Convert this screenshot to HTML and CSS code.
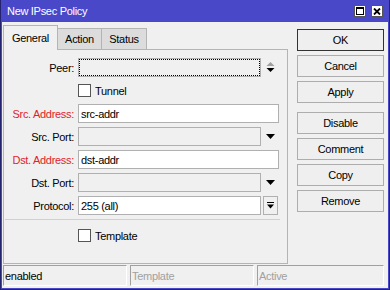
FILE: index.html
```html
<!DOCTYPE html>
<html>
<head>
    <meta charset="utf-8">
    <title>New IPsec Policy</title>
    <link rel="stylesheet" href="styles.css">
</head>
<body>
<div class="window">
    <div class="titlebar">
        <span class="title">New IPsec Policy</span>
        <span class="tb-btns">
            <span class="tb-btn">
                <svg width="8" height="8" viewBox="0 0 8 8"><rect x="0.5" y="0.5" width="7" height="7" fill="none" stroke="#000"/><rect x="0" y="0" width="8" height="2" fill="#000"/></svg>
            </span>
            <span class="tb-btn">
                <svg width="8" height="7" viewBox="0 0 8 7"><path d="M1 0.5 L7 6.5 M7 0.5 L1 6.5" stroke="#000" stroke-width="1.8"/></svg>
            </span>
        </span>
    </div>

    <div class="client">
        <div class="main">
            <div class="tabs-area">
                <div class="tabs">
                    <span class="tab tab-general active">General</span>
                    <span class="tab tab-action">Action</span>
                    <span class="tab tab-status">Status</span>
                </div>
                <div class="panel">
                    <div class="row">
                        <span class="lbl">Peer:</span>
                        <span class="field combo-field focus"></span>
                        <span class="arrow">
                            <svg width="9" height="13" viewBox="0 0 9 13"><path d="M0.5 5 L4.5 1 L8.5 5 Z" fill="#a0a0a0"/><path d="M0.5 7 L8.5 7 L4.5 11 Z" fill="#000"/></svg>
                        </span>
                    </div>
                    <div class="row">
                        <span class="lbl"></span>
                        <span class="check"></span>
                        <span>Tunnel</span>
                    </div>
                    <div class="row">
                        <span class="lbl req">Src. Address:</span>
                        <span class="field">src-addr</span>
                    </div>
                    <div class="row">
                        <span class="lbl">Src. Port:</span>
                        <span class="field combo-field"></span>
                        <span class="arrow">
                            <svg width="9" height="5" viewBox="0 0 9 5"><path d="M0 0 H9 L4.5 5 Z" fill="#000"/></svg>
                        </span>
                    </div>
                    <div class="row">
                        <span class="lbl req">Dst. Address:</span>
                        <span class="field">dst-addr</span>
                    </div>
                    <div class="row">
                        <span class="lbl">Dst. Port:</span>
                        <span class="field combo-field"></span>
                        <span class="arrow">
                            <svg width="9" height="5" viewBox="0 0 9 5"><path d="M0 0 H9 L4.5 5 Z" fill="#000"/></svg>
                        </span>
                    </div>
                    <div class="row">
                        <span class="lbl">Protocol:</span>
                        <span class="field select-field">255 (all)</span>
                        <span class="drop-btn">
                            <svg width="7" height="7" viewBox="0 0 7 7"><rect x="0" y="0" width="7" height="1" fill="#000"/><path d="M0 2.5 H7 L3.5 6.5 Z" fill="#000"/></svg>
                        </span>
                    </div>
                    <div class="sep"></div>
                    <div class="row">
                        <span class="lbl"></span>
                        <span class="check"></span>
                        <span>Template</span>
                    </div>
                </div>
            </div>

            <div class="buttons">
                <span class="btn default">OK</span>
                <span class="btn">Cancel</span>
                <span class="btn">Apply</span>
                <span class="btn group">Disable</span>
                <span class="btn">Comment</span>
                <span class="btn">Copy</span>
                <span class="btn">Remove</span>
            </div>
        </div>

        <div class="statusbar">
            <span class="cell cell-short">enabled</span>
            <span class="cell cell-short off">Template</span>
            <span class="cell cell-wide off">Active</span>
        </div>
    </div>
</div>
</body>
</html>
```

FILE: styles.css
```css
body {
    margin: 0;
    font-family: "Liberation Sans", Arial, sans-serif;
    font-size: 11px;
    letter-spacing: -0.3px;
    color: #000;
}

/* window frame */
.window {
    width: 390px;
    height: 290px;
    box-sizing: border-box;
    background: #4848c8;
    border: 1px solid #24246e;
    border-top: none;
    padding: 0 1px 1px;
    display: flex;
    flex-direction: column;
}

.titlebar {
    height: 22px;
    display: flex;
    align-items: center;
    justify-content: space-between;
    padding: 0 5px 0 5px;
    color: #fff;
}

.tb-btns {
    display: flex;
    gap: 5px;
}

.tb-btn {
    width: 12px;
    height: 12px;
    box-sizing: border-box;
    background: #fff;
    border: 1px solid #555;
    display: flex;
    align-items: center;
    justify-content: center;
}

.client {
    flex: 1;
    background: #f0f0f0;
    display: flex;
    flex-direction: column;
    padding: 3px 4px 0 1px;
}

.main {
    display: flex;
}

/* tabs */
.tabs-area {
    width: 285px;
}

.tabs {
    display: flex;
    align-items: flex-end;
    height: 24px;
}

.tab {
    box-sizing: border-box;
    height: 21px;
    border: 1px solid #b4b4b4;
    border-bottom: none;
    background: #dcdcdc;
    display: flex;
    align-items: center;
    justify-content: center;
}

.tab + .tab {
    margin-left: -1px;
}

.tab.active {
    height: 25px;
    margin-bottom: -1px;
    background: #f0f0f0;
    position: relative;
    z-index: 1;
}

.tab-general { width: 55px; }
.tab-action { width: 45px; }
.tab-status { width: 46px; }

.panel {
    box-sizing: border-box;
    height: 215px;
    border: 1px solid #b4b4b4;
    padding: 8px 0 0 0;
}

/* form rows */
.row {
    display: flex;
    align-items: center;
    height: 19px;
    margin-bottom: 4px;
}

.lbl {
    width: 70px;
    margin-right: 4px;
    text-align: right;
}

.lbl.req {
    color: #e0232a;
}

.field {
    box-sizing: border-box;
    width: 201px;
    height: 19px;
    border: 1px solid #b0b0b0;
    background: #fff;
    padding-left: 2px;
    display: flex;
    align-items: center;
}

.combo-field {
    width: 183px;
    background: #f0f0f0;
}

.select-field {
    width: 183px;
}

.focus {
    outline: 1px dotted #000;
    outline-offset: -2px;
}

.arrow {
    width: 18px;
    display: flex;
    justify-content: center;
}

.drop-btn {
    box-sizing: border-box;
    width: 15px;
    height: 19px;
    margin-left: 2px;
    border: 1px solid #b0b0b0;
    display: flex;
    align-items: center;
    justify-content: center;
}

.check {
    box-sizing: border-box;
    width: 13px;
    height: 13px;
    border: 1px solid #555;
    background: #fff;
    margin-right: 4px;
}

.sep {
    height: 1px;
    background: #d0d0d0;
    margin: 1px 7px 6px 1px;
}

/* right hand buttons */
.buttons {
    width: 87px;
    margin: 4px 0 0 9px;
    display: flex;
    flex-direction: column;
    gap: 4px;
}

.btn {
    box-sizing: border-box;
    height: 22px;
    border: 1px solid #adadad;
    background: #efefef;
    display: flex;
    align-items: center;
    justify-content: center;
}

.btn.default {
    border-color: #333;
}

.btn.group {
    margin-top: 5px;
}

/* status bar */
.statusbar {
    display: flex;
    gap: 3px;
    height: 21px;
    margin-top: 1px;
}

.cell {
    box-sizing: border-box;
    border-top: 1px solid #a0a0a0;
    border-left: 1px solid #a0a0a0;
    border-right: 1px solid #fff;
    border-bottom: 1px solid #fff;
    padding-left: 1px;
    display: flex;
    align-items: center;
}

.cell-short { width: 124px; }
.cell-wide { flex: 1; }

.cell.off {
    color: #a0a0a0;
}
```
